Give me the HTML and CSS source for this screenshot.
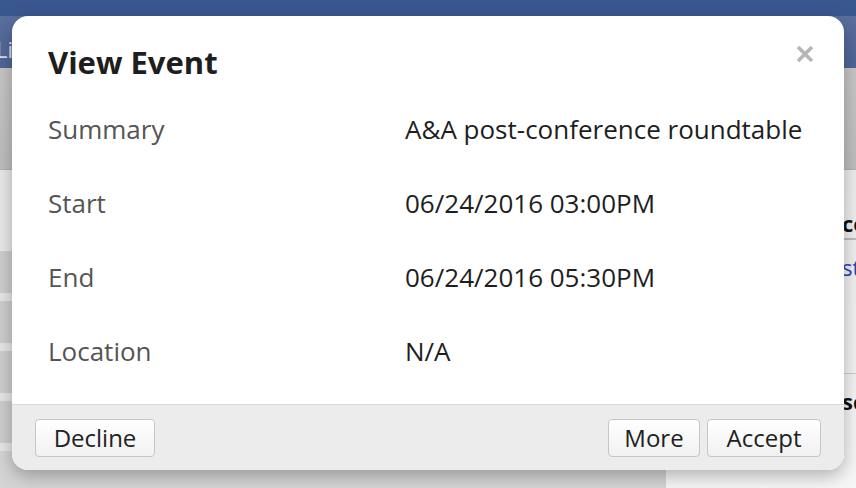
FILE: index.html
```html
<!DOCTYPE html>
<html>
<head>
<meta charset="utf-8">
<link rel="stylesheet" href="styles.css">
</head>
<body>
<div class="page">
  <header class="topbar">
    <div class="topbar-strip"></div>
    <div class="topbar-main"><span class="topbar-text">List</span></div>
  </header>
  <div class="toolbar"></div>
  <div class="content">
    <div class="list">
      <div class="list-row light tall"></div>
      <div class="list-row dark"></div>
      <div class="list-row light"></div>
      <div class="list-row dark"></div>
      <div class="list-row light"></div>
      <div class="list-row dark"></div>
      <div class="list-row light"></div>
      <div class="list-row dark"></div>
      <div class="list-row light"></div>
      <div class="list-row rest"></div>
    </div>
    <div class="detail">
      <div class="detail-head">co</div>
      <div class="detail-link">st</div>
      <div class="detail-sub">sc</div>
    </div>
  </div>

  <div class="modal">
    <div class="modal-head">
      <h1 class="modal-title">View Event</h1>
      <svg class="modal-close" width="18" height="18" viewBox="0 0 18 18" aria-label="Close">
        <path d="M2 2 L16 16 M16 2 L2 16" stroke="#b6b6b6" stroke-width="3.6" stroke-linecap="butt"/>
      </svg>
    </div>
    <div class="modal-body">
      <div class="field">
        <div class="field-label">Summary</div>
        <div class="field-value">A&amp;A post-conference roundtable</div>
      </div>
      <div class="field">
        <div class="field-label">Start</div>
        <div class="field-value">06/24/2016 03:00PM</div>
      </div>
      <div class="field">
        <div class="field-label">End</div>
        <div class="field-value">06/24/2016 05:30PM</div>
      </div>
      <div class="field">
        <div class="field-label">Location</div>
        <div class="field-value">N/A</div>
      </div>
    </div>
    <div class="modal-foot">
      <button class="btn btn-decline">Decline</button>
      <div class="foot-right">
        <button class="btn btn-more">More</button>
        <button class="btn btn-accept">Accept</button>
      </div>
    </div>
  </div>
</div>
</body>
</html>
```

FILE: styles.css
```css
* { box-sizing: border-box; }
html, body { margin: 0; padding: 0; }
body {
  width: 856px;
  height: 488px;
  overflow: hidden;
  font-family: "Open Sans", "Lato", sans-serif;
  background: #d6d6d6;
}
.page {
  position: relative;
  width: 856px;
  height: 488px;
  display: flex;
  flex-direction: column;
}
.topbar { display: flex; flex-direction: column; }
.topbar-strip { height: 16px; background: #3a5890; }
.topbar-main {
  height: 52px;
  background: linear-gradient(#5b6f9f, #4e6596);
  color: #d9e0ee;
  font-size: 22px;
  line-height: 26px;
  padding: 20px 0 0 0;
}
.topbar-text { margin-left: -4px; }
.toolbar {
  height: 102px;
  background: linear-gradient(#c6c6c6, #bdbdbd);
  border-bottom: 1px solid #b0b0b0;
}
.content { flex: 1; display: flex; min-height: 0; }
.list { width: 666px; flex-shrink: 0; display: flex; flex-direction: column; }
.list-row.light { background: #e6e6e6; height: 8px; }
.list-row.tall { height: 81px; background: linear-gradient(90deg, #e9e9e9, #dedede); }
.list-row.dark { background: #cdcdcd; height: 42px; }
.list-row.rest { flex: 1; background: #d4d4d4; }
.detail {
  flex: 1;
  min-width: 0;
  overflow: hidden;
  white-space: nowrap;
  background: linear-gradient(#ececec, #f6f6f6);
  padding-left: 176px;
  padding-top: 38px;
  font-size: 22px;
}
.detail-head { font-weight: 700; color: #111; height: 32px; border-bottom: 2px solid #bbb; }
.detail-link { color: #2244bb; margin-top: 12px; height: 122px; border-bottom: 1px solid #ccc; }
.detail-sub { font-weight: 700; color: #111; margin-top: 12px; }

.modal {
  position: absolute;
  left: 12px;
  top: 16px;
  width: 832px;
  height: 454px;
  background: #fff;
  border-radius: 16px;
  box-shadow: 0 6px 18px rgba(0, 0, 0, 0.28);
  display: flex;
  flex-direction: column;
  overflow: hidden;
}
.modal-head {
  height: 76px;
  padding: 29px 30px 0 36px;
  display: flex;
  justify-content: space-between;
  align-items: flex-start;
}
.modal-title {
  margin: 0;
  font-size: 31px;
  line-height: 34px;
  font-weight: 700;
  color: #1e1e1e;
}
.modal-close { margin-top: 0; }
.modal-body { flex: 1; padding: 0 36px; }
.field { display: flex; align-items: center; height: 74px; font-size: 26px; }
.field-label { width: 357px; color: #555; }
.field-value { color: #1e1e1e; }
.modal-foot {
  height: 66px;
  background: #ececec;
  border-top: 1px solid #d8d8d8;
  padding: 14px 23px 0 23px;
  display: flex;
  justify-content: space-between;
  align-items: flex-start;
}
.foot-right { display: flex; gap: 7px; }
.btn {
  height: 38px;
  font-family: "Open Sans", "Lato", sans-serif;
  font-size: 24px;
  line-height: 36px;
  color: #222;
  border: 1px solid #c6c6c6;
  border-radius: 4px;
  background: linear-gradient(#ffffff, #f1f1f1);
  padding: 0;
}
.btn-decline { width: 120px; }
.btn-more { width: 92px; }
.btn-accept { width: 114px; }
```
